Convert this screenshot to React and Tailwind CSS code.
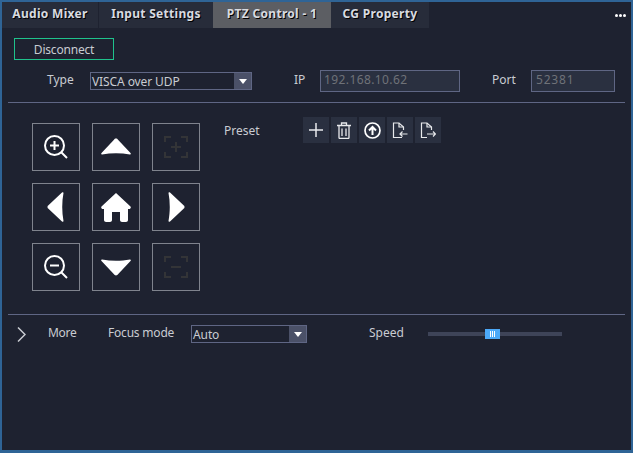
import React from 'react';

// Caja de control PTZ
const PadButton = ({ children }) => (
  <button type="button" className="flex h-12 w-12 items-center justify-center border border-[#7f838d]">
    {children}
  </button>
);

const PresetButton = ({ children }) => (
  <button type="button" className="flex h-[26px] w-[26px] items-center justify-center bg-[#2a3040]">
    {children}
  </button>
);

const Tab = ({ label, className, active }) => (
  <div
    className={`flex h-[26px] items-center justify-center pb-[2px] text-[12px] font-bold tracking-[0.3px] text-[#d8dbe0] [text-shadow:1px_1px_0_#000] ${className} ${
      active ? 'bg-[#5c5e63]' : 'bg-[#272c3a]'
    }`}
  >
    {label}
  </div>
);

const Select = ({ value, className }) => (
  <div className={`flex h-[18px] items-stretch border border-[#5f6684] ${className}`}>
    <span className="flex-1 pl-[1px] text-[12px] leading-[17px] tracking-[-0.1px] text-[#c9ccd2]">{value}</span>
    <span className="flex w-[17px] items-center justify-center bg-[#4b5168]">
      <svg width="8" height="5" viewBox="0 0 8 5"><path d="M0 0h8L4 5z" fill="#fff" /></svg>
    </span>
  </div>
);

const ZoomIcon = ({ plus }) => (
  <svg width="24" height="24" viewBox="0 0 24 24" fill="none" stroke="#fff" strokeWidth="2">
    <circle cx="10.5" cy="10.5" r="9.5" />
    <path d="M17.5 17.5L23 23" />
    <path d="M6 10.5h9" />
    {plus && <path d="M10.5 6v9" />}
  </svg>
);

const FrameIcon = ({ plus }) => (
  <svg width="24" height="24" viewBox="0 0 24 24" fill="none" stroke="#333437" strokeWidth="2">
    <path d="M1 7V2h6M17 2h6v5M23 17v5h-6M7 22H1v-5" />
    <path d="M7 12h10" />
    {plus && <path d="M12 7v10" />}
  </svg>
);

export default function App() {
  return (
    <div className="flex h-[453px] w-[633px] flex-col border-2 border-b-[3px] border-[#2f6496] bg-[#1e2230] font-['Noto_Sans',sans-serif]">
      {/* Pestañas */}
      <div className="flex items-start justify-between">
        <div className="flex">
          <Tab label="Audio Mixer" className="w-[96px]" />
          <Tab label="Input Settings" className="ml-px w-[114px]" />
          <Tab label="PTZ Control - 1" className="w-[118px]" active />
          <Tab label="CG Property" className="w-[98px]" />
        </div>
        <div className="mr-[5px] mt-[12px] flex gap-[1px]">
          <span className="h-[3px] w-[3px] rounded-full bg-white" />
          <span className="h-[3px] w-[3px] rounded-full bg-white" />
          <span className="h-[3px] w-[3px] rounded-full bg-white" />
        </div>
      </div>

      {/* Conexión */}
      <div className="px-[6px] text-[12px] text-[#c9ccd2]">
        <button type="button" className="ml-[6px] mt-[10px] h-[22px] w-[100px] border border-[#1fc28c] pt-[2px] text-[12px] tracking-[-0.2px] text-[#c9ccd2]">
          Disconnect
        </button>
        <div className="mt-[10px] flex h-[22px] items-center">
          <span className="ml-[39px] w-[43px] pb-[2px]">Type</span>
          <Select value="VISCA over UDP" className="w-[162px]" />
          <span className="ml-[42px] w-[26px] pb-[3px]">IP</span>
          <div className="flex h-[22px] w-[140px] items-center border border-[#5f6684] bg-[#2a3040] pb-[2px] pl-[3px] tracking-[0.4px] text-[#6f7278]">192.168.10.62</div>
          <span className="ml-[32px] w-[39px] pb-[2px]">Port</span>
          <div className="flex h-[22px] w-[84px] items-center border border-[#5f6684] bg-[#2a3040] pb-[2px] pl-[4px] tracking-[0.8px] text-[#6f7278]">52381</div>
        </div>
        <div className="mt-[10px] h-px w-[617px] bg-[#5f6684]" />

        <div className="flex h-[211px] items-start">
          <div className="ml-[24px] mt-[20px] grid w-[168px] grid-cols-3 gap-3">
            <PadButton><ZoomIcon plus /></PadButton>
            <PadButton>
              <svg width="30" height="18" viewBox="0 0 30 18"><path d="M15 0.5c1 0 1.500.5 2 1.200L29.500 15c.6.8.4 1.600-.6 1.500C20 14.800 10 14.800 1.100 16.500c-1 .1-1.200-.7-.6-1.500L13 1.700c.5-.7 1-1.200 2-1.200z" fill="#fff" /></svg>
            </PadButton>
            <PadButton><FrameIcon plus /></PadButton>
            <PadButton>
              <svg width="18" height="30" viewBox="0 0 18 30"><path d="M.5 15c0-1 .5-1.500 1.200-2L15 .5c.8-.6 1.600-.4 1.500.6C14.800 10 14.800 20 16.500 28.900c.1 1-.7 1.200-1.500.6L1.700 17C1 16.500.5 16 .5 15z" fill="#fff" /></svg>
            </PadButton>
            <PadButton>
              <svg width="30" height="29" viewBox="0 0 30 29"><path d="M15 0L29.500 13.500c.8 1.200 0 2.500-1.500 2.500h-1v11c0 1-1 2-2 2h-4c-1 0-2-1-2-2v-8h-8v8c0 1-1 2-2 2H5c-1 0-2-1-2-2V16H2c-1.500 0-2.300-1.300-1.500-2.500z" fill="#fff" /></svg>
            </PadButton>
            <PadButton>
              <svg width="18" height="30" viewBox="0 0 18 30"><path d="M17.500 15c0-1-.5-1.500-1.200-2L3 .5c-.8-.6-1.600-.4-1.500.6C3.200 10 3.200 20 1.500 28.900c-.1 1 .7 1.200 1.500.6L16.300 17c.7-.5 1.200-1 1.200-2z" fill="#fff" /></svg>
            </PadButton>
            <PadButton><ZoomIcon /></PadButton>
            <PadButton>
              <svg width="30" height="18" viewBox="0 0 30 18"><path d="M15 17.500c1 0 1.500-.5 2-1.200L29.500 3c.6-.8.4-1.600-.6-1.500C20 3.200 10 3.200 1.100 1.500c-1-.1-1.200.7-.6 1.500L13 16.300c.5.7 1 1.200 2 1.200z" fill="#fff" /></svg>
            </PadButton>
            <PadButton><FrameIcon /></PadButton>
          </div>

          <span className="ml-[24px] mt-[19px] w-[79px]">Preset</span>
          <div className="mt-[14px] flex gap-[2px]">
            <PresetButton>
              <svg width="16" height="16" viewBox="0 0 16 16" stroke="#e8e9ec" strokeWidth="1.500"><path d="M8 1v14M1 8h14" /></svg>
            </PresetButton>
            <PresetButton>
              <svg width="14" height="17" viewBox="0 0 14 17" fill="none" stroke="#e8e9ec" strokeWidth="1.300"><path d="M0 3.500h14M4.500 3V1h5v2M2 4v11.500c0 .5.5 1 1 1h8c.5 0 1-.5 1-1V4M5 6.500v7.500M9 6.500v7.500" /></svg>
            </PresetButton>
            <PresetButton>
              <svg width="17" height="17" viewBox="0 0 17 17" fill="none" stroke="#fff"><circle cx="8.500" cy="8.500" r="7.500" strokeWidth="1.700" /><path d="M8.500 13V5M5 8.500l3.500-3.500 3.500 3.500" strokeWidth="2" /></svg>
            </PresetButton>
            <PresetButton>
              <svg width="16" height="17" viewBox="0 0 16 17" fill="none" stroke="#e8e9ec" strokeWidth="1.200"><path d="M10 15.500H1.500V1H7l4.500 4v3" /><path d="M7 1v4h4.500" /><path d="M15.500 12H8M10.500 9.500L8 12l2.500 2.500" /></svg>
            </PresetButton>
            <PresetButton>
              <svg width="16" height="17" viewBox="0 0 16 17" fill="none" stroke="#e8e9ec" strokeWidth="1.200"><path d="M7 15.500H1.500V1H7l4.500 4v3" /><path d="M7 1v4h4.500" /><path d="M7 12h8M13 9.500l2.500 2.500-2.500 2.500" /></svg>
            </PresetButton>
          </div>
        </div>

        <div className="h-px w-[617px] bg-[#5f6684]" />

        {/* Ajustes inferiores */}
        <div className="mt-[10px] flex h-[18px] items-center">
          <svg className="ml-[9px]" width="9" height="15" viewBox="0 0 9 15" fill="none" stroke="#c9ccd2" strokeWidth="1.500"><path d="M1 .5L8 7.500 1 14.500" /></svg>
          <span className="ml-[22px] w-[60px] pb-[3px] tracking-[-0.3px]">More</span>
          <span className="w-[83px] pb-[3px] tracking-[-0.2px]">Focus mode</span>
          <Select value="Auto" className="w-[116px]" />
          <span className="ml-[62px] w-[59px] pb-[3px]">Speed</span>
          <div className="relative h-[4px] w-[134px] bg-[#3e4458]">
            <div className="absolute left-[57px] top-[-3px] flex h-[10px] w-[15px] items-center justify-center gap-px bg-[#4ca9f8]">
              <span className="h-[6px] w-px bg-white" />
              <span className="h-[6px] w-px bg-white" />
              <span className="h-[6px] w-px bg-white" />
            </div>
          </div>
        </div>
      </div>
    </div>
  );
}
